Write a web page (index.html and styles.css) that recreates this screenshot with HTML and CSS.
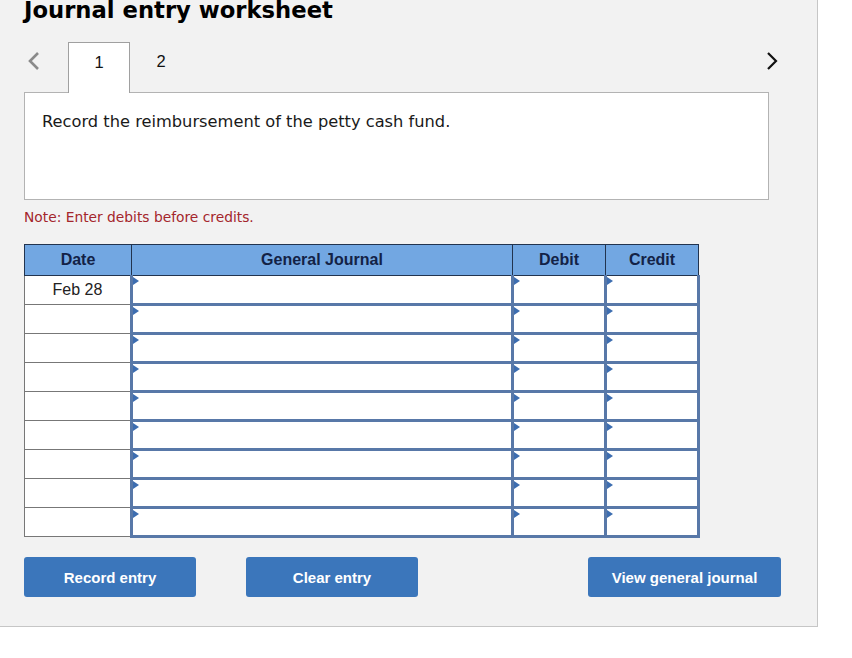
FILE: index.html
```html
<!DOCTYPE html>
<html>
<head>
<meta charset="utf-8">
<title>Journal entry worksheet</title>
<link rel="stylesheet" href="styles.css">
</head>
<body>
<div class="panel">
  <h1 class="title">Journal entry worksheet</h1>
  <div class="tabs">
    <span class="chev chev-left"><svg width="14" height="20" viewBox="0 0 14 20"><path d="M11 2 L3 10 L11 18" fill="none" stroke="#8a8a8a" stroke-width="2.6"/></svg></span>
    <div class="tab active">1</div>
    <div class="tab">2</div>
    <span class="chev chev-right"><svg width="14" height="20" viewBox="0 0 14 20"><path d="M3 2 L11 10 L3 18" fill="none" stroke="#111" stroke-width="2.2"/></svg></span>
  </div>
  <div class="question">Record the reimbursement of the petty cash fund.</div>
  <p class="note">Note: Enter debits before credits.</p>
  <table class="journal">
    <thead>
      <tr><th class="c-date">Date</th><th class="c-gj">General Journal</th><th class="c-amt">Debit</th><th class="c-amt">Credit</th></tr>
    </thead>
    <tbody>
      <tr><td class="date">Feb 28</td><td class="in"></td><td class="in"></td><td class="in"></td></tr>
      <tr><td class="date"></td><td class="in"></td><td class="in"></td><td class="in"></td></tr>
      <tr><td class="date"></td><td class="in"></td><td class="in"></td><td class="in"></td></tr>
      <tr><td class="date"></td><td class="in"></td><td class="in"></td><td class="in"></td></tr>
      <tr><td class="date"></td><td class="in"></td><td class="in"></td><td class="in"></td></tr>
      <tr><td class="date"></td><td class="in"></td><td class="in"></td><td class="in"></td></tr>
      <tr><td class="date"></td><td class="in"></td><td class="in"></td><td class="in"></td></tr>
      <tr><td class="date"></td><td class="in"></td><td class="in"></td><td class="in"></td></tr>
      <tr><td class="date"></td><td class="in"></td><td class="in"></td><td class="in"></td></tr>
    </tbody>
  </table>
  <div class="actions">
    <button class="btn btn-record">Record entry</button>
    <button class="btn btn-clear">Clear entry</button>
    <button class="btn btn-view">View general journal</button>
  </div>
</div>
</body>
</html>
```

FILE: styles.css
```css
html, body {
  margin: 0;
  padding: 0;
  background: #ffffff;
}

.panel {
  width: 793px;
  height: 626px;
  padding: 0 0 0 24px;
  background: #f2f2f2;
  border-right: 1px solid #c6c6c6;
  border-bottom: 1px solid #c6c6c6;
  box-sizing: content-box;
  overflow: hidden;
  font-family: "DejaVu Sans", Verdana, sans-serif;
}

.title {
  margin: -1px 0 0 0;
  font-family: "DejaVu Sans", Verdana, sans-serif;
  font-weight: bold;
  font-size: 22.7px;
  line-height: 23px;
  color: #000;
}

.tabs {
  display: flex;
  align-items: stretch;
  height: 50px;
  margin-top: 20px;
  width: 745px;
}

.chev {
  display: flex;
  align-items: flex-start;
  padding-top: 9px;
}

.chev-left {
  width: 41px;
  margin-left: 3px;
}

.chev-right {
  margin-left: auto;
  margin-right: -10px;
}

.tab {
  width: 62px;
  box-sizing: border-box;
  font-family: "Liberation Sans", Arial, sans-serif;
  font-size: 16.5px;
  color: #111;
  display: flex;
  justify-content: center;
  padding-top: 10px;
}

.tab.active {
  background: #fff;
  border: 1px solid #a0a0a0;
  border-bottom: none;
  margin-bottom: -1px;
  position: relative;
  z-index: 1;
}

.question {
  width: 745px;
  height: 108px;
  box-sizing: border-box;
  background: #fff;
  border: 1px solid #b3b3b3;
  padding: 19px 17px 0 17px;
  font-size: 16.25px;
  line-height: 20px;
  color: #1a1a1a;
}

.note {
  margin: 7px 0 0 0;
  font-size: 13.8px;
  line-height: 20px;
  color: #a4262c;
}

.journal {
  margin-top: 17px;
  border-collapse: collapse;
  table-layout: fixed;
  width: 670px;
  font-family: "Liberation Sans", Arial, sans-serif;
}

.journal th {
  background: #72a7e2;
  color: #132246;
  font-weight: bold;
  font-size: 16px;
  height: 30px;
  padding: 0;
  border: 1px solid #22344f;
  text-align: center;
}

.c-date { width: 106px; }
.c-gj { width: 380px; }
.c-amt { width: 92px; }

.journal tbody tr {
  height: 29px;
}

.journal td {
  padding: 0;
  height: 29px;
  box-sizing: border-box;
}

.journal td.date {
  background: #fff;
  border: 1px solid #777;
  text-align: center;
  font-size: 16px;
  color: #222;
}

.journal td.in {
  background: #fff;
  border: 3px solid #5878a8;
  border-top: 0;
  position: relative;
}

.journal td.in::before {
  content: "";
  position: absolute;
  left: 0;
  top: 1px;
  width: 0;
  height: 0;
  border-top: 4px solid transparent;
  border-bottom: 4px solid transparent;
  border-left: 6px solid #3d6db0;
}

.actions {
  display: flex;
  margin-top: 19px;
}

.btn {
  height: 40px;
  border: none;
  border-radius: 3px;
  background: #3b76bb;
  color: #fff;
  font-family: "Liberation Sans", Arial, sans-serif;
  font-weight: bold;
  font-size: 15px;
  padding: 0;
  cursor: pointer;
}

.btn-record { width: 172px; }
.btn-clear { width: 172px; margin-left: 50px; }
.btn-view { width: 193px; margin-left: 170px; }
```
